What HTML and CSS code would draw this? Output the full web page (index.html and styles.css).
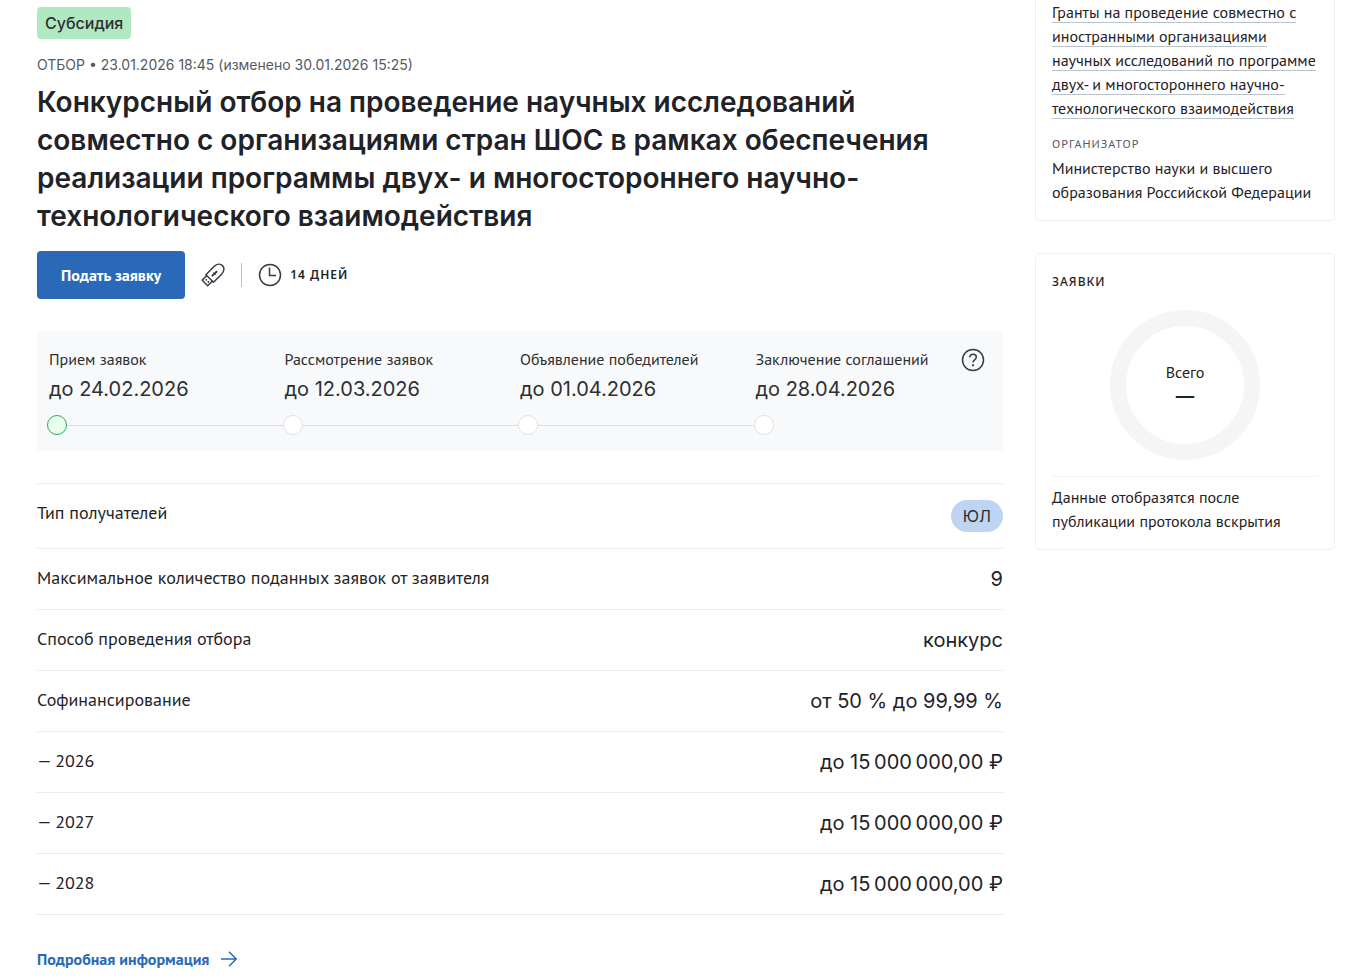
FILE: index.html
```
<!DOCTYPE html>
<html lang="ru">
<head>
    <meta charset="UTF-8">
    <meta name="viewport" content="width=device-width, initial-scale=1.0">
    <title>Конкурсный отбор</title>
    <link rel="stylesheet" href="styles.css">
</head>
<body>
    <div class="page">
        <main class="main">
            <span class="tag">Субсидия</span>
            <p class="meta">ОТБОР • 23.01.2026 18:45 (изменено 30.01.2026 15:25)</p>
            <h1 class="title">Конкурсный отбор на проведение научных исследований совместно с организациями стран ШОС в рамках обеспечения реализации программы двух- и многостороннего научно-технологического взаимодействия</h1>

            <div class="actions">
                <button class="apply-button" type="button">Подать заявку</button>
                <svg width="24" height="24" viewBox="0 0 24 24" fill="none" stroke="#383d43" stroke-width="1.5" stroke-linejoin="round" stroke-linecap="round">
                    <path d="M4.900 11.800 13 3.500C16 .600 19.500 .600 21.500 2.600S23.500 8.200 20.600 11.200L12.500 19.300Z"/>
                    <path d="M5.500 12.800 1.200 17.200 6.700 22.800 11.300 18.300"/>
                    <path d="M11.500 12.500 15.500 8.700" stroke-width="2"/>
                    <path d="M12.500 9.700 14.400 11.600" stroke-width="1"/>
                    <path d="M5.200 16.800h.1M7.300 19h.1" stroke-width="1.800"/>
                </svg>
                <span class="divider"></span>
                <span class="days">
                    <svg width="24" height="24" viewBox="0 0 24 24" fill="none" stroke="#383d43" stroke-width="1.5">
                        <circle cx="12" cy="12" r="10.500"/>
                        <path d="M11.500 4.500v8H18"/>
                    </svg>
                    14 ДНЕЙ
                </span>
            </div>

            <section class="timeline">
                <ol class="steps">
                    <li class="step active">
                        <span class="step-name">Прием заявок</span>
                        <span class="step-date">до 24.02.2026</span>
                        <span class="step-line"></span>
                    </li>
                    <li class="step">
                        <span class="step-name">Рассмотрение заявок</span>
                        <span class="step-date">до 12.03.2026</span>
                        <span class="step-line"></span>
                    </li>
                    <li class="step">
                        <span class="step-name">Объявление победителей</span>
                        <span class="step-date">до 01.04.2026</span>
                        <span class="step-line"></span>
                    </li>
                    <li class="step">
                        <span class="step-name">Заключение соглашений</span>
                        <span class="step-date">до 28.04.2026</span>
                        <span class="step-line"></span>
                    </li>
                </ol>
                <button class="help" type="button" aria-label="Справка">
                    <svg width="24" height="24" viewBox="0 0 24 24" fill="none" stroke="#383d43" stroke-width="1.500">
                        <circle cx="12" cy="12" r="10.500"/>
                        <path d="M8.800 9.200C9 5.200 15.300 5.500 15.300 9.200 15.300 11.800 12 11.800 12 14.500"/>
                        <path d="M12 16.200v2" stroke-width="2"/>
                    </svg>
                </button>
            </section>

            <dl class="params">
                <div class="param">
                    <dt>Тип получателей</dt>
                    <dd><span class="pill">ЮЛ</span></dd>
                </div>
                <div class="param">
                    <dt>Максимальное количество поданных заявок от заявителя</dt>
                    <dd>9</dd>
                </div>
                <div class="param">
                    <dt>Способ проведения отбора</dt>
                    <dd>конкурс</dd>
                </div>
                <div class="param">
                    <dt>Софинансирование</dt>
                    <dd>от 50 % до 99,99 %</dd>
                </div>
                <div class="param">
                    <dt>— 2026</dt>
                    <dd>до 15&#8239;000&#8239;000,00 ₽</dd>
                </div>
                <div class="param">
                    <dt>— 2027</dt>
                    <dd>до 15&#8239;000&#8239;000,00 ₽</dd>
                </div>
                <div class="param">
                    <dt>— 2028</dt>
                    <dd>до 15&#8239;000&#8239;000,00 ₽</dd>
                </div>
            </dl>

            <a class="more" href="#">
                Подробная информация
                <svg width="16" height="16" viewBox="0 0 16 16" fill="none" stroke="#2a69b8" stroke-width="1.500">
                    <path d="M0 8h15M8 .8 15.200 8 8 15.200"/>
                </svg>
            </a>
        </main>

        <aside class="sidebar">
            <section class="card card-grant">
                <a class="grant-link" href="#">Гранты на проведение совместно с иностранными организациями научных исследований по программе двух- и многостороннего научно-технологического взаимодействия</a>
                <h2 class="label">ОРГАНИЗАТОР</h2>
                <p>Министерство науки и высшего образования Российской Федерации</p>
            </section>

            <section class="card card-requests">
                <h2 class="card-title">ЗАЯВКИ</h2>
                <div class="ring">
                    <span>Всего</span>
                    <strong>—</strong>
                </div>
                <p class="note">Данные отобразятся после публикации протокола вскрытия</p>
            </section>
        </aside>
    </div>
</body>
</html>
```
FILE: styles.css
```
*,
*::before,
*::after {
    margin: 0;
    padding: 0;
    box-sizing: border-box;
}

body {
    background-color: #fff;
    color: #1f2327;
    font-family: "PT Sans", "Noto Sans", sans-serif;
    font-size: 16px;
    line-height: 24px;
}

.page {
    display: grid;
    grid-template-columns: minmax(0, 1fr) 300px;
    gap: 32px;
    padding: 0 14px 0 37px;
}

.main {
    display: flex;
    flex-direction: column;
    align-items: stretch;
    padding-top: 7px;
}

.tag {
    align-self: flex-start;
    padding: 0 8px;
    border-radius: 4px;
    background-color: #afe8c1;
    color: #2d2f31;
    font: 500 16px/32px Inter, sans-serif;
}

.meta {
    margin-top: 16px;
    color: #555a61;
    font: 14px/20px Inter, sans-serif;
}

.title {
    margin-top: 8px;
    font: 600 28px/38px Inter, sans-serif;
}

.actions {
    display: flex;
    align-items: center;
    gap: 16px;
    margin-top: 16px;
}

.apply-button {
    height: 48px;
    padding: 0 24px;
    border: none;
    border-radius: 4px;
    background-color: #2a69b8;
    color: #fff;
    font-family: inherit;
    font-size: 16px;
    font-weight: 700;
    cursor: pointer;
}

.divider {
    width: 1px;
    height: 24px;
    background-color: #b9c0ca;
}

.days {
    display: flex;
    align-items: center;
    gap: 8px;
    font: 600 12px/24px "Noto Sans", sans-serif;
    letter-spacing: 1px;
}

.timeline {
    position: relative;
    margin-top: 32px;
    padding: 16px 14px 16px 10px;
    border-radius: 4px;
    background-color: #f8f9fb;
    color: #2d2f31;
}

.steps {
    display: grid;
    grid-template-columns: repeat(4, 1fr);
    list-style: none;
}

.step {
    display: flex;
    flex-direction: column;
}

.step-name {
    padding-left: 2px;
}

.step-date {
    padding: 4px 0 12px 2px;
    font: 20px/28px Inter, sans-serif;
}

.step-line {
    display: flex;
    align-items: center;
}

.step-line::before {
    content: "";
    width: 20px;
    height: 20px;
    border: 1px solid #dfe2e7;
    border-radius: 50%;
    background-color: #fff;
}

.step:not(:last-child) .step-line::after {
    content: "";
    flex: 1;
    height: 1px;
    background-color: #d9dce1;
}

.step.active .step-line::before {
    border-color: #35a85a;
    background-color: #e6ffee;
}

.help {
    position: absolute;
    top: 17px;
    right: 18px;
    width: 24px;
    height: 24px;
    border: none;
    background: none;
    cursor: pointer;
}

.params {
    margin-top: 32px;
    border-top: 1px solid #e9ebef;
}

.param {
    display: flex;
    justify-content: space-between;
    padding: 16px 0;
    border-bottom: 1px solid #e9ebef;
}

.param dt {
    font-size: 18px;
    line-height: 26px;
}

.param dd {
    font: 20px/28px Inter, sans-serif;
}

.pill {
    display: block;
    padding: 0 12px;
    border-radius: 16px;
    background-color: #bdd5f2;
    color: #2d2f31;
    font-size: 16px;
    line-height: 32px;
}

.more {
    display: flex;
    align-items: center;
    align-self: flex-start;
    gap: 12px;
    margin-top: 32px;
    color: #2a69b8;
    font-weight: 700;
    text-decoration: none;
}

.card {
    padding: 16px;
    border: 1px solid #eef0f3;
    border-radius: 4px;
}

.card-grant {
    padding-top: 0;
    border-top: none;
    border-radius: 0 0 4px 4px;
}

.grant-link {
    border-bottom: 1px solid #b9c3cc;
    color: inherit;
    text-decoration: none;
}

.label {
    margin-top: 12px;
    color: #555a61;
    font-size: 12px;
    font-weight: 400;
    line-height: 24px;
    letter-spacing: 1px;
}

.card-requests {
    margin-top: 32px;
}

.card-title {
    font: 500 12px/24px "Noto Sans", sans-serif;
    letter-spacing: 1px;
}

.ring {
    display: flex;
    flex-direction: column;
    align-items: center;
    justify-content: center;
    width: 150px;
    height: 150px;
    margin: 16px auto;
    padding-bottom: 4px;
    border: 16px solid #f5f5f5;
    border-radius: 50%;
}

.ring strong {
    font: 600 20px/22px "Noto Sans", sans-serif;
}

.note {
    padding-top: 8px;
    border-top: 1px solid #f5f5f5;
}
```
